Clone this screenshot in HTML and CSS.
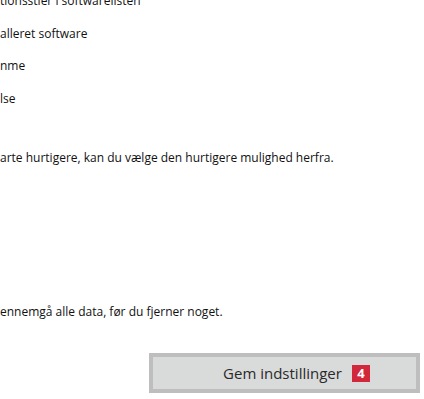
FILE: index.html
```html
<!DOCTYPE html>
<html lang="da">
<head>
    <meta charset="UTF-8">
    <meta name="viewport" content="width=device-width, initial-scale=1.0">
    <title>Indstillinger</title>
    <link rel="stylesheet" href="styles.css">
</head>
<body>
    <div class="panel">
        <ul class="options">
            <li>tionsstier i softwarelisten</li>
            <li>alleret software</li>
            <li>nme</li>
            <li>lse</li>
        </ul>

        <p class="note">arte hurtigere, kan du vælge den hurtigere mulighed herfra.</p>

        <p class="note note-warning">ennemgå alle data, før du fjerner noget.</p>

        <div class="actions">
            <button class="save-btn" type="button">
                Gem indstillinger
                <span class="badge">4</span>
            </button>
        </div>
    </div>
</body>
</html>
```

FILE: styles.css
```css
/* Reset */
* {
    margin: 0;
    padding: 0;
    box-sizing: border-box;
}

html, body {
    height: 100%;
    overflow: hidden;
}

body {
    font-family: 'Open Sans', 'Noto Sans', sans-serif;
    background-color: #ffffff;
    color: #111111;
}

.panel {
    display: flex;
    flex-direction: column;
}

.options {
    list-style: none;
    margin-top: -15px;
}

.options li {
    font-size: 12px;
    line-height: 32px;
    height: 32.5px;
    white-space: nowrap;
}

.note {
    font-size: 12px;
    line-height: 32px;
    margin-top: 27px;
    white-space: nowrap;
}

.note-warning {
    margin-top: 122px;
}

.actions {
    display: flex;
    justify-content: flex-end;
    margin-top: 25px;
    padding-right: 4px;
}

.save-btn {
    width: 271px;
    height: 40px;
    border: 4px solid #bebebe;
    background-color: #d9dada;
    font-family: 'Open Sans', 'Noto Sans', sans-serif;
    font-size: 15px;
    color: #2a2a2a;
    display: flex;
    align-items: center;
    justify-content: center;
    gap: 10px;
    padding-left: 24px;
    cursor: pointer;
}

.badge {
    display: inline-flex;
    align-items: center;
    justify-content: center;
    width: 18px;
    height: 17px;
    background-color: #d2283b;
    color: #ffffff;
    font-weight: bold;
    font-size: 13px;
}
```
